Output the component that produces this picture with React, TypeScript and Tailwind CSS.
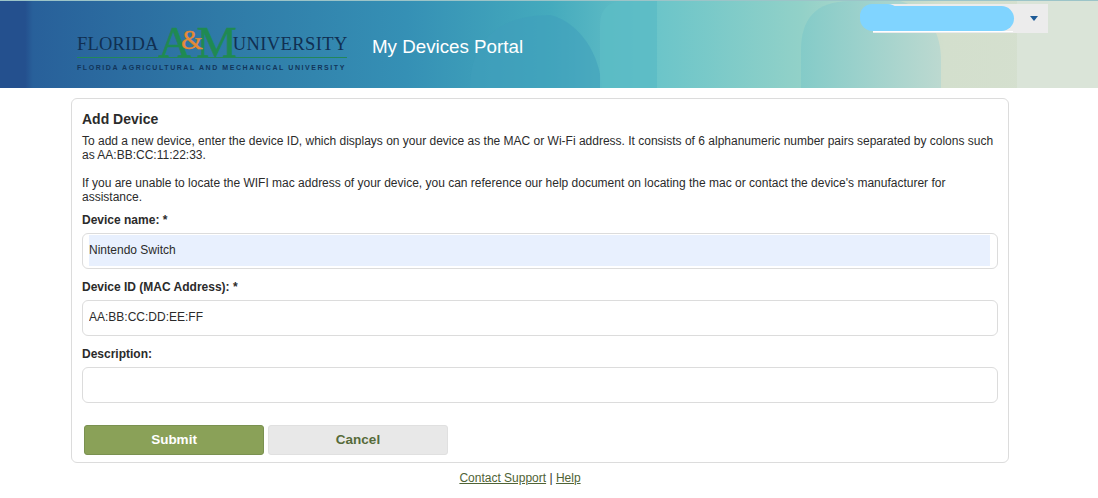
import React from 'react';

function HeaderArt() {
  // background shapes of the banner
  return (
    <svg className="absolute inset-0 h-full w-full" viewBox="0 0 1098 88" preserveAspectRatio="none">
      <defs>
        <linearGradient id="banner" x1="0" x2="1" y1="0" y2="0">
          <stop offset="0" stopColor="#24508e" />
          <stop offset="0.023" stopColor="#24508e" />
          <stop offset="0.03" stopColor="#28609a" />
          <stop offset="0.2" stopColor="#2f7aa7" />
          <stop offset="0.37" stopColor="#3590b5" />
          <stop offset="0.5" stopColor="#44aabd" />
          <stop offset="0.6" stopColor="#6cc5c9" />
          <stop offset="0.73" stopColor="#92d1c8" />
          <stop offset="0.86" stopColor="#d3dfcd" />
          <stop offset="1" stopColor="#d6e0d0" />
        </linearGradient>
        <linearGradient id="arch" x1="0" x2="1" y1="0" y2="0">
          <stop offset="0" stopColor="#84cbc8" />
          <stop offset="1" stopColor="#bcd9d0" />
        </linearGradient>
      </defs>
      <rect width="1098" height="88" fill="url(#banner)" />
      <rect width="1098" height="1" fill="#9cc4c8" />
      <path d="M470 88 C470 50 490 15 550 15 C580 22 600 55 602 88 Z" fill="#3f9fbb" opacity="0.55" />
      <path d="M600 88 V25 C600 8 610 1 625 1 H657 V88 Z" fill="#5cbcc6" opacity="0.85" />
      <path d="M801 88 V50 C801 20 815 1 850 1 H900 C930 10 941 35 941 60 V88 Z" fill="url(#arch)" />
      <rect x="1017" y="1" width="81" height="87" fill="#dae4d8" />
    </svg>
  );
}

function Logo() {
  return (
    <div className="relative mt-[10px] flex w-[270px] flex-col font-['Liberation_Serif',serif]">
      <div className="flex h-[31px] items-end border-b border-[#23875a] leading-none">
        <span className="mb-[3px] text-[18.5px] leading-none tracking-[0.2px] text-[#102f52]">FLORIDA</span>
        <span className="text-[45px] leading-[30px] tracking-tight text-[#1f8a52] [-webkit-text-stroke:0.6px_#1f8a52]">A</span>
        <span className="relative z-10 -ml-[9px] mb-[3px] text-[28px] leading-none text-[#e58a34] [-webkit-text-stroke:0.3px_#e58a34]">&amp;</span>
        <span className="-ml-[6px] w-[36px] text-[45px] leading-[30px] text-[#1f8a52] [-webkit-text-stroke:0.6px_#1f8a52]">M</span>
        <span className="mb-[3px] text-[18.5px] leading-none tracking-[0.4px] text-[#102f52]">UNIVERSITY</span>
      </div>
      <div className="mt-[6px] whitespace-nowrap font-['Liberation_Sans',sans-serif] text-[7px] font-bold leading-[8px] tracking-[1.56px] text-[#12355a]">
        FLORIDA AGRICULTURAL AND MECHANICAL UNIVERSITY
      </div>
    </div>
  );
}

function Field({ label, value, autofill }: { label: string; value: string; autofill?: boolean }) {
  return (
    <div>
      <label className="block h-[14px] text-[12px] font-bold leading-[14px] text-[#2b2b2b]">{label}</label>
      <div className="mt-[6px] flex h-[36px] items-start rounded-[6px] border border-[#dcdcdc] bg-white pl-[6px] pr-[7px] pt-[1px]">
        <input
          readOnly
          value={value}
          className={`h-[31px] w-full pb-[2px] text-[12px] text-[#2b2b2b] outline-none ${autofill ? 'bg-[#e8f0fe]' : 'bg-white'}`}
        />
      </div>
    </div>
  );
}

export default function App() {
  return (
    <div className="h-[498px] w-full overflow-hidden bg-white font-['Liberation_Sans',Arial,sans-serif] text-[#2b2b2b]">
      <header className="relative flex h-[88px] items-center pl-[77px]">
        <HeaderArt />
        <div className="relative flex items-center">
          <Logo />
          <h1 className="ml-[25px] mt-[7px] text-[18.75px] leading-none text-white">My Devices Portal</h1>
        </div>
        <div className="absolute left-[873px] top-[4px] flex h-[29px] w-[175px] items-center justify-end bg-[#ececec] pr-[10px]">
          <span className="h-0 w-0 border-x-[4px] border-t-[5px] border-x-transparent border-t-[#1d5a96]" />
        </div>
        <div className="absolute left-[873px] top-[31px] h-[1px] w-[140px] bg-white" />
        <div className="absolute left-[860px] top-[4px] h-[24px] w-[40px] rounded-[14px] bg-[#80d4ff]" />
        <div className="absolute left-[860px] top-[6px] h-[25px] w-[154px] rounded-[13px] bg-[#80d4ff]" />
      </header>

      <main className="ml-[71px] mt-[10px] h-[365px] w-[938px] rounded-[6px] border border-[#dcdcdc] px-[10px] pt-[12px]">
        <h2 className="text-[14px] font-bold leading-[16px]">Add Device</h2>
        <p className="mt-[7px] text-[12px] leading-[14px]">
          To add a new device, enter the device ID, which displays on your device as the MAC or Wi-Fi address. It consists of 6 alphanumeric number pairs separated by colons such as AA:BB:CC:11:22:33.
        </p>
        <p className="mt-[14px] text-[12px] leading-[14px]">
          If you are unable to locate the WIFI mac address of your device, you can reference our help document on locating the mac or contact the device's manufacturer for assistance.
        </p>
        <div className="mt-[9px] flex flex-col gap-[11px]">
          <Field label="Device name: *" value="Nintendo Switch" autofill />
          <Field label="Device ID (MAC Address): *" value="AA:BB:CC:DD:EE:FF" />
          <Field label="Description:" value="" />
        </div>
        <div className="ml-[2px] mt-[22px] flex gap-[4px]">
          <button className="h-[30px] w-[180px] rounded-[3px] border border-[#7a9150] bg-[#8aa158] text-[13.5px] font-bold text-white">Submit</button>
          <button className="h-[30px] w-[180px] rounded-[3px] border border-[#e0e0e0] bg-[#e8e8e8] text-[13.5px] font-bold text-[#566b3a]">Cancel</button>
        </div>
      </main>

      <footer className="mt-[8px] w-[1040px] text-center text-[12px] leading-[14px] text-[#4f6335]">
        <a className="underline">Contact Support</a>
        <span className="text-[#2b2b2b]"> | </span>
        <a className="underline">Help</a>
      </footer>
    </div>
  );
}
